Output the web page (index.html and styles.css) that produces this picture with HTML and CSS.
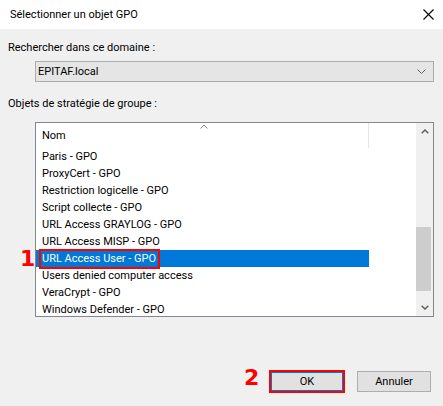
FILE: index.html
```html
<!DOCTYPE html>
<html lang="fr">
<head>
<meta charset="utf-8">
<title>Sélectionner un objet GPO</title>
<link rel="stylesheet" href="styles.css">
</head>
<body>
<div class="window">
  <div class="titlebar">
    <span class="title">Sélectionner un objet GPO</span>
    <svg class="close" width="11" height="11" viewBox="0 0 11 11"><path d="M0.5 0.5L10.5 10.5M10.5 0.5L0.5 10.5" stroke="#000" stroke-width="1.1" fill="none"/></svg>
  </div>
  <div class="body">
    <div class="label l1">Rechercher dans ce domaine :</div>
    <div class="combo">
      <span>EPITAF.local</span>
      <svg width="9" height="5" viewBox="0 0 9 5"><path d="M0.5 0.5L4.5 4.5L8.5 0.5" stroke="#606060" stroke-width="1" fill="none"/></svg>
    </div>
    <div class="label l2">Objets de stratégie de groupe :</div>
    <div class="listbox">
      <div class="listmain">
        <div class="header">
          <div class="col">
            <svg class="sort" width="8" height="5" viewBox="0 0 8 5"><path d="M0.5 4.5L4 1L7.5 4.5" stroke="#8a8a8a" stroke-width="1" fill="none"/></svg>
            <span>Nom</span>
          </div>
        </div>
        <div class="row">Paris - GPO</div>
        <div class="row">ProxyCert - GPO</div>
        <div class="row">Restriction logicelle - GPO</div>
        <div class="row">Script collecte - GPO</div>
        <div class="row">URL Access GRAYLOG - GPO</div>
        <div class="row">URL Access MISP - GPO</div>
        <div class="row sel"><span class="mark">URL Access User - GPO</span></div>
        <div class="row">Users denied computer access</div>
        <div class="row">VeraCrypt - GPO</div>
        <div class="row">Windows Defender - GPO</div>
      </div>
      <div class="scrollbar">
        <div class="arrow"><svg width="8" height="5" viewBox="0 0 8 5"><path d="M0.7 4.3L4 1L7.3 4.3" stroke="#606060" stroke-width="1.5" fill="none"/></svg></div>
        <div class="track"><div class="thumb"></div></div>
        <div class="arrow"><svg width="8" height="5" viewBox="0 0 8 5"><path d="M0.7 0.7L4 4L7.3 0.7" stroke="#606060" stroke-width="1.5" fill="none"/></svg></div>
      </div>
    </div>
    <div class="buttons">
      <div class="btn ok">OK</div>
      <div class="btn">Annuler</div>
    </div>
  </div>
  <div class="badge b1">1</div>
  <div class="badge b2">2</div>
</div>
</body>
</html>
```

FILE: styles.css
```css
* { box-sizing: border-box; }
html, body { margin: 0; padding: 0; }
body {
  width: 443px;
  height: 406px;
  background: #f0f0f0;
  font-family: Roboto, "Noto Sans", sans-serif;
  font-size: 11px;
  color: #000;
  overflow: hidden;
}
.window { position: relative; height: 406px; }
.titlebar {
  height: 29px;
  background: #fff;
  display: flex;
  align-items: center;
  justify-content: space-between;
  padding: 0 9px 0 10px;
}
.title { line-height: 16px; font-size: 11px; }
.close { display: block; }
.body { padding: 0 9px 0 8px; }
.label { line-height: 16px; }
.l1 { margin-top: 11px; }
.l2 { margin-top: 14px; }
.combo {
  margin: 5px 0 0 27px;
  height: 21px;
  background: #e5e5e5;
  border: 1px solid #acacac;
  display: flex;
  align-items: center;
  justify-content: space-between;
  padding: 0 7px 0 2px;
}
.combo svg { display: block; }
.listbox {
  margin: 10px 0 0 27px;
  height: 195px;
  border: 1px solid #828790;
  background: #fff;
  display: flex;
}
.listmain { flex: 1; overflow: hidden; }
.header { height: 25px; display: flex; }
.col {
  position: relative;
  width: 333px;
  border-right: 1px solid #e5e5e5;
  display: flex;
  align-items: center;
  padding-left: 6px;
}
.sort { position: absolute; top: 1px; left: 164px; }
.row {
  width: 333px;
  height: 17px;
  line-height: 17px;
  padding-left: 6px;
  white-space: nowrap;
}
.row.sel { background: #0078d7; color: #fff; }
.mark { position: relative; display: inline-block; }
.mark::after {
  content: "";
  position: absolute;
  left: -3px;
  right: -4px;
  top: -1px;
  bottom: -2px;
  border: 2px solid #f00;
}
.scrollbar {
  width: 17px;
  background: #f0f0f0;
  display: flex;
  flex-direction: column;
}
.arrow { height: 17px; display: flex; align-items: center; justify-content: center; }
.arrow svg { display: block; }
.track { flex: 1; }
.thumb { margin-top: 87px; height: 64px; width: 15px; background: #cdcdcd; }
.buttons {
  display: flex;
  justify-content: flex-end;
  gap: 13px;
  margin-top: 54px;
  padding-right: 3px;
}
.btn {
  width: 74px;
  height: 21px;
  background: #e1e1e1;
  border: 1px solid #adadad;
  display: flex;
  align-items: center;
  justify-content: center;
}
.btn.ok {
  border: 2px solid #0078d7;
  outline: 2px solid #f00;
  outline-offset: -1px;
}
.badge {
  position: absolute;
  font-family: "DejaVu Sans", sans-serif;
  font-weight: bold;
  font-size: 22px;
  line-height: 1;
  color: #f00;
}
.b1 { left: 20px; top: 248px; }
.b2 { left: 244px; top: 367px; }
```
